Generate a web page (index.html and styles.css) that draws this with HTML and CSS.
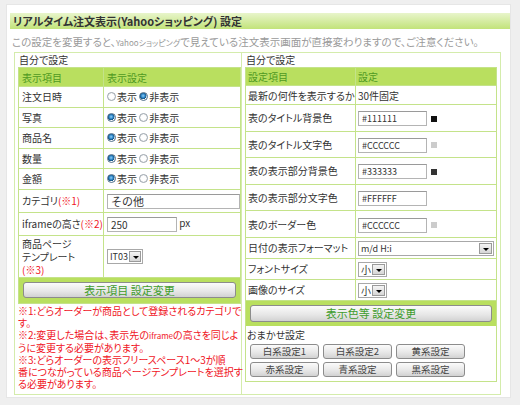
FILE: index.html
```html
<!DOCTYPE html>
<html lang="ja">
<head>
  <meta charset="UTF-8" />
  <title>リアルタイム注文表示(Yahooショッピング) 設定</title>
  <link rel="stylesheet" href="styles.css">
</head>
<body>
  <div class="panel">
    <h1 class="title">リアルタイム注文表示(Yahooショッピング) 設定</h1>
    <p class="desc">この設定を変更すると、<small>Yahooショッピング</small>で見えている注文表示画面が直接変わりますので、ご注意ください。</p>

    <div class="box">
      <!-- 左：表示項目 -->
      <div class="col col-left">
        <div class="cap">自分で設定</div>
        <table class="grid grid-left">
          <tr class="head"><th class="c1">表示項目</th><th>表示設定</th></tr>
          <tr class="r"><td class="c1">注文日時</td><td><label><input type="radio" name="date">表示</label> <label><input type="radio" name="date" checked>非表示</label></td></tr>
          <tr class="r"><td class="c1">写真</td><td><label><input type="radio" name="photo" checked>表示</label> <label><input type="radio" name="photo">非表示</label></td></tr>
          <tr class="r"><td class="c1">商品名</td><td><label><input type="radio" name="name" checked>表示</label> <label><input type="radio" name="name">非表示</label></td></tr>
          <tr class="r"><td class="c1">数量</td><td><label><input type="radio" name="qty" checked>表示</label> <label><input type="radio" name="qty">非表示</label></td></tr>
          <tr class="r"><td class="c1">金額</td><td><label><input type="radio" name="price" checked>表示</label> <label><input type="radio" name="price">非表示</label></td></tr>
          <tr class="r-cat"><td class="c1">カテゴリ<em>(※1)</em></td><td><input class="text text-cat" type="text" value="その他"></td></tr>
          <tr class="r-ifr"><td class="c1">iframeの高さ<em>(※2)</em></td><td><input class="text text-num" type="text" value="250"> px</td></tr>
          <tr class="r-tpl"><td class="c1">商品ページ<br>テンプレート<br><em>(※3)</em></td><td><div class="sel sel-tpl"><span>IT03</span><i></i></div></td></tr>
          <tr class="act"><td colspan="2"><button class="btn btn-main btn-left">表示項目 設定変更</button></td></tr>
        </table>
        <div class="notes">
          <p>※1:どらオーダーが商品として登録されるカテゴリで<br>す。</p>
          <p>※2:変更した場合は、表示先の<small>iframe</small>の高さを同じよ<br>うに変更する必要があります。</p>
          <p>※3:どらオーダーの表示フリースペース1～3が順<br>番につながっている商品ページテンプレートを選択す<br>る必要があります。</p>
        </div>
      </div>

      <!-- 右：表示色など -->
      <div class="col col-right">
        <div class="cap">自分で設定</div>
        <div class="inner">
          <table class="grid grid-right">
            <tr class="head"><th class="c1">設定項目</th><th>設定</th></tr>
            <tr class="r"><td class="c1">最新の何件を表示するか</td><td>30件固定</td></tr>
            <tr class="r-color"><td class="c1">表のタイトル背景色</td><td><input class="text text-color" type="text" value="#111111"><span class="swatch" style="background:#111111"></span></td></tr>
            <tr class="r-color"><td class="c1">表のタイトル文字色</td><td><input class="text text-color" type="text" value="#CCCCCC"><span class="swatch" style="background:#CCCCCC"></span></td></tr>
            <tr class="r-color"><td class="c1">表の表示部分背景色</td><td><input class="text text-color" type="text" value="#333333"><span class="swatch" style="background:#333333"></span></td></tr>
            <tr class="r-color"><td class="c1">表の表示部分文字色</td><td><input class="text text-color" type="text" value="#FFFFFF"><span class="swatch" style="background:#FFFFFF"></span></td></tr>
            <tr class="r-color"><td class="c1">表のボーダー色</td><td><input class="text text-color" type="text" value="#CCCCCC"><span class="swatch" style="background:#CCCCCC"></span></td></tr>
            <tr class="r-sel"><td class="c1">日付の表示フォーマット</td><td><div class="sel sel-date"><span>m/d H:i</span><i></i></div></td></tr>
            <tr class="r-sel"><td class="c1">フォントサイズ</td><td><div class="sel sel-small"><span>小</span><i></i></div></td></tr>
            <tr class="r-sel"><td class="c1">画像のサイズ</td><td><div class="sel sel-small"><span>小</span><i></i></div></td></tr>
          </table>
          <div class="act act-right"><button class="btn btn-main btn-right">表示色等 設定変更</button></div>
          <div class="preset">
            <div class="preset-cap">おまかせ設定</div>
            <div class="preset-grid">
              <button class="btn btn-preset">白系設定1</button>
              <button class="btn btn-preset">白系設定2</button>
              <button class="btn btn-preset">黄系設定</button>
              <button class="btn btn-preset">赤系設定</button>
              <button class="btn btn-preset">青系設定</button>
              <button class="btn btn-preset">黒系設定</button>
            </div>
          </div>
        </div>
      </div>
    </div>
  </div>
</body>
</html>
```

FILE: styles.css
```css
* {
  box-sizing: border-box;
}

body {
  margin: 0;
  background: #efefef;
  font-family: "Noto Sans CJK JP", "Liberation Sans", sans-serif;
  font-size: 10px;
  color: #333;
  font-feature-settings: "palt";
}

.panel {
  margin: 4px 9px 0 6px;
  height: 394px;
  background: #fff;
  border: 1px solid #e6e6e6;
  padding: 8px 0 0 3px;
}

.title {
  margin: 0;
  height: 16px;
  line-height: 16px;
  padding-left: 3px;
  font-size: 11px;
  font-weight: bold;
  color: #333;
  background: linear-gradient(#e8f5cb, #c2e37a);
}

.desc {
  margin: 6px 0 0 0;
  padding-left: 2px;
  height: 14px;
  line-height: 14px;
  font-size: 10.5px;
  color: #9a9a9a;
  white-space: nowrap;
}

.desc small {
  font-size: 8px;
}

.box {
  display: flex;
  margin: 3px 9px 0 4px;
  border: 1px solid #d4ecac;
}

.col-left {
  width: 227px;
  padding: 0 3px 4px 3px;
  border-right: 1px solid #d4ecac;
}

.col-right {
  flex: 1;
  padding: 0 3px 0 3px;
}

.cap {
  height: 14px;
  line-height: 14px;
  padding-left: 1px;
  font-size: 10px;
}

/* tables */
.grid {
  width: 100%;
  border-collapse: separate;
  border-spacing: 0;
}

.grid-left {
  border-top: 1px solid #c4e38a;
  border-left: 1px solid #c4e38a;
}

.grid th,
.grid td {
  padding: 0 0 0 3px;
  text-align: left;
  vertical-align: middle;
  border-bottom: 1px solid #c4e38a;
  border-right: 1px solid #c4e38a;
  white-space: nowrap;
}

.grid th {
  height: 19px;
  background: #b9df5f;
  color: #4f9a22;
  font-weight: normal;
}

.grid-left .c1 {
  width: 79px;
}

.grid-left tr.r td {
  height: 20.5px;
}

.grid em {
  font-style: normal;
  color: #f0141e;
}

.r-cat td {
  height: 23px;
}

.r-ifr td {
  height: 23px;
}

.r-tpl td {
  height: 42px;
  line-height: 13px;
}

.act td,
.act {
  height: 26px;
  background: #b9df5f;
}

.grid .act td {
  padding: 0 4px;
  border-right: 1px solid #c4e38a;
}

/* right column */
.inner {
  border: 1px solid #c4e38a;
}

.grid-right th,
.grid-right td {
  padding-left: 2px;
}

.grid-right th:last-child,
.grid-right td:last-child {
  border-right: none;
}

.grid-right .c1 {
  width: 110px;
}

.grid-right th {
  height: 18px;
}

.grid-right tr.r td {
  height: 19px;
}

.r-color td {
  height: 26.6px;
}

.r-sel td {
  height: 21px;
}

.act-right {
  height: 25px;
  padding: 4px 4px 0 4px;
}

.preset {
  padding: 2px 0 4px 1px;
}

.preset-cap {
  height: 14px;
  line-height: 14px;
}

.preset-grid {
  display: grid;
  grid-template-columns: repeat(3, 69px);
  gap: 3px 4px;
  padding-left: 3px;
  margin-top: 2px;
}

/* form controls */
label {
  display: inline-flex;
  align-items: center;
}

input[type="radio"] {
  appearance: none;
  width: 9px;
  height: 9px;
  margin: 0 1px 0 0;
  border-radius: 50%;
  border: 1px solid #9aa3ab;
  background: radial-gradient(circle, #ffffff 40%, #e2e4e8 100%);
}

input[type="radio"]:checked {
  border-color: #4f6f8a;
  background: radial-gradient(circle at 45% 40%, #8fd0f8 0, #2b83c6 35%, #14507e 55%, #ffffff 62%, #e6e8ea 100%);
}

.text {
  height: 15px;
  padding: 0 3px;
  border: 1px solid #b4b4b4;
  border-top-color: #9a9a9a;
  font-family: inherit;
  font-size: 10px;
  color: #333;
  vertical-align: middle;
  background: #fff;
}

.text-cat {
  width: 133px;
  font-size: 11px;
}

.text-num {
  width: 70px;
}

.text-color {
  width: 69px;
  font-size: 9px;
}

.swatch {
  display: inline-block;
  width: 6px;
  height: 6px;
  margin-left: 4px;
  vertical-align: middle;
}

.sel {
  display: inline-flex;
  align-items: stretch;
  height: 15px;
  border: 1px solid #a8a8a8;
  background: #fff;
  vertical-align: middle;
}

.sel span {
  flex: 1;
  padding-left: 2px;
  line-height: 13px;
  font-size: 9px;
}

.sel i {
  width: 13px;
  margin: 1px;
  border: 1px solid #9a9a9a;
  background: linear-gradient(#f4f4f4, #d6d6d6);
  position: relative;
}

.sel i::after {
  content: "";
  position: absolute;
  left: 3px;
  top: 4px;
  border-left: 3px solid transparent;
  border-right: 3px solid transparent;
  border-top: 3px solid #000;
}

.sel-tpl {
  width: 36px;
}

.sel-date {
  width: 136px;
}

.sel-small {
  width: 29px;
}

.sel-small span {
  font-size: 10px;
}

/* buttons */
.btn {
  display: block;
  border: 1px solid #8c8c8c;
  border-radius: 3px;
  background: linear-gradient(#fbfbfb, #e6e6e6 60%, #d2d2d2);
  font-family: inherit;
  font-size: 11px;
  padding: 0;
  cursor: pointer;
}

.btn-main {
  width: 100%;
  color: #3f9c2c;
}

.btn-left {
  height: 16px;
  line-height: 14px;
}

.btn-right {
  height: 17px;
  line-height: 15px;
}

.btn-preset {
  height: 15px;
  line-height: 13px;
  color: #444;
  font-size: 9.5px;
}

/* notes */
.notes {
  padding-top: 1px;
  color: #f0141e;
  font-size: 10px;
  line-height: 12px;
  white-space: nowrap;
}

.notes p {
  margin: 0;
}

.notes small {
  font-size: 8px;
}
```
